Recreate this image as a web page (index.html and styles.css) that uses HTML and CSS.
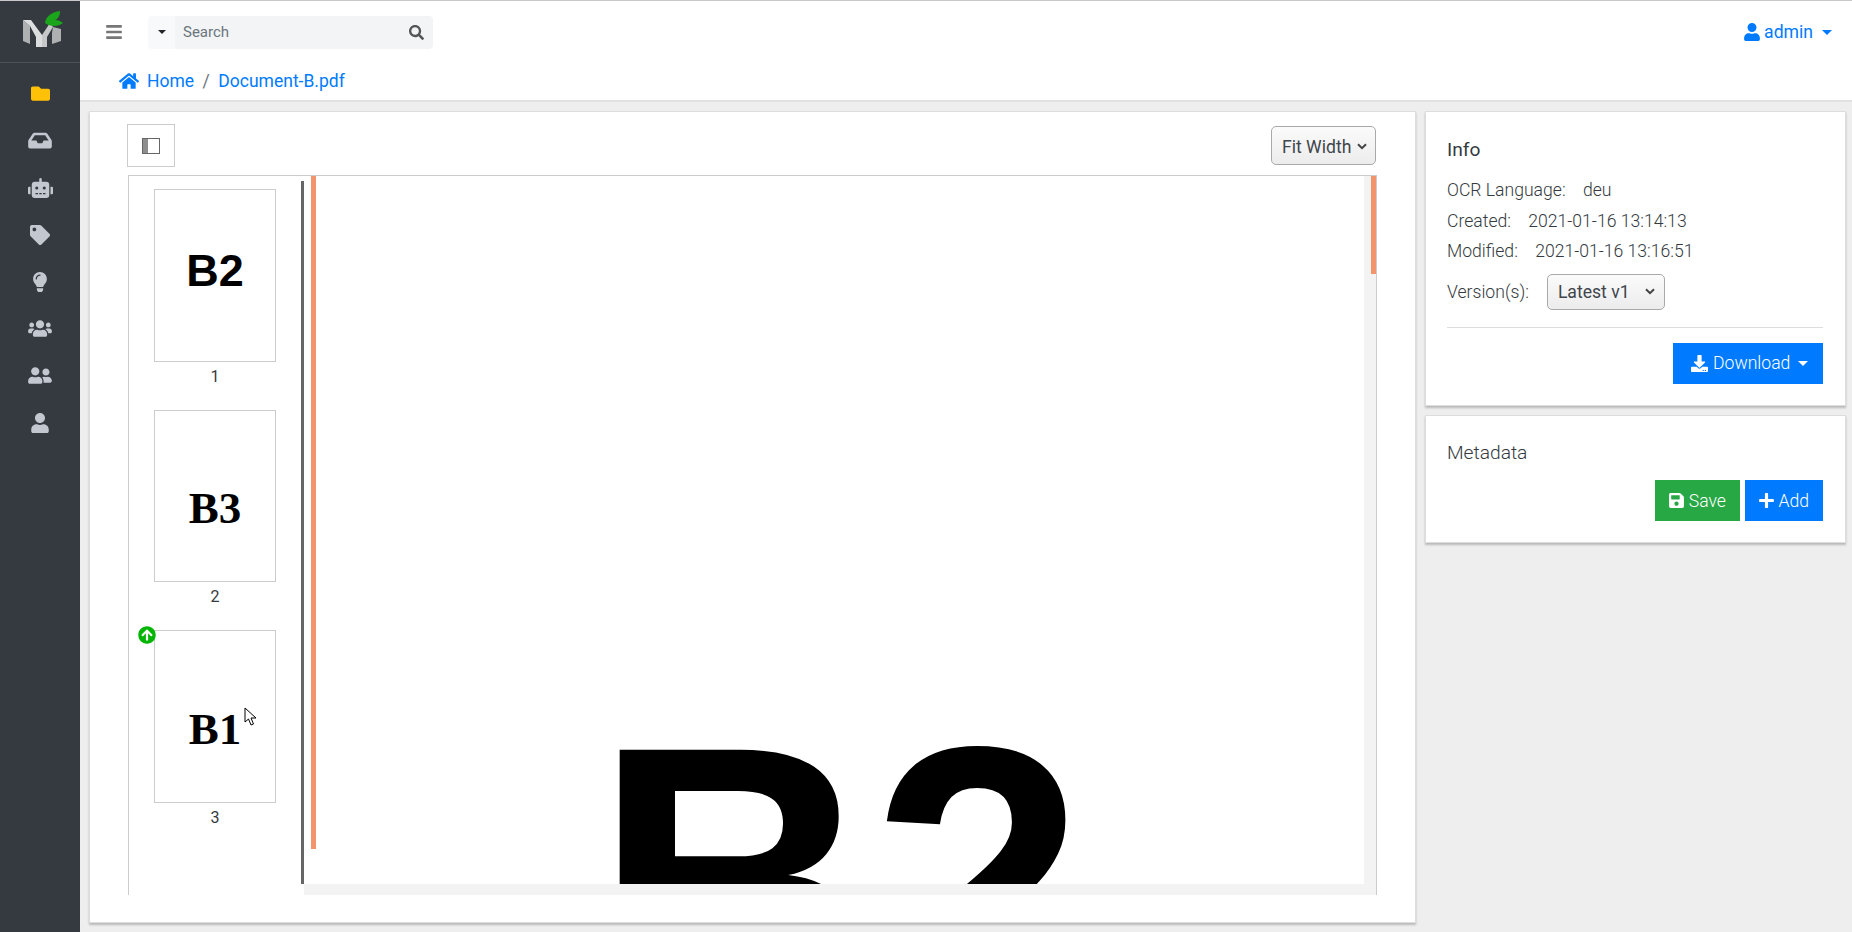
FILE: index.html
```html
<!DOCTYPE html>
<html lang="en">
<head>
  <meta charset="UTF-8">
  <meta name="viewport" content="width=device-width, initial-scale=1.0">
  <title>Document-B.pdf</title>
  <link rel="stylesheet" href="styles.css">
</head>
<body>
  <div class="app">
    <aside class="sidebar">
      <div class="logo">
        <svg width="50" height="46" viewBox="0 0 50 46">
          <path fill="#aeb0b2" d="M7 14 L14 20 L14 38 L7 35 Z"/>
          <path fill="#dcddde" d="M7 14 L15 14 L26 29 L26 41 L20 41 L20 31 L14 20 Z"/>
          <path fill="#c6c7c9" d="M26 29 L34 17 L37 21 L31 31 L31 41 L26 41 Z"/>
          <path fill="#aeb0b2" d="M37 21 L45 23 L45 35 L36 38 L36 27 Z"/>
          <path fill="#1aa51a" d="M29 17 C30 10 36 6 44 5 C44 10 42 13 39 14 C42 14 45 15 47 17 C42 21 34 21 29 17 Z"/>
        </svg>
      </div>
      <nav class="side-nav">
        <a class="side-item side-item-active"><svg width="21" height="19" viewBox="0 0 512 512"><path fill="currentColor" d="M464 128H272l-64-64H48C21.49 64 0 85.49 0 112v288c0 26.51 21.49 48 48 48h416c26.51 0 48-21.49 48-48V176c0-26.51-21.49-48-48-48z"/></svg></a>
        <a class="side-item"><svg width="24" height="21" viewBox="0 0 576 512"><path fill="currentColor" d="M567.938 243.908L462.25 85.374A48.003 48.003 0 0 0 422.311 64H153.689a48 48 0 0 0-39.938 21.374L8.062 243.908A47.994 47.994 0 0 0 0 270.533V400c0 26.51 21.49 48 48 48h480c26.51 0 48-21.49 48-48V270.533a47.994 47.994 0 0 0-8.062-26.625zM162.252 128h251.497l85.333 128H376l-32 64H232l-32-64H76.918l85.334-128z"/></svg></a>
        <a class="side-item"><svg width="25" height="20" viewBox="0 0 640 512"><path fill="currentColor" d="M32,224H64V416H32A31.96166,31.96166,0,0,1,0,384V256A31.96166,31.96166,0,0,1,32,224Zm512-48V448a64.06328,64.06328,0,0,1-64,64H160a64.06328,64.06328,0,0,1-64-64V176a79.974,79.974,0,0,1,80-80H288V32a32,32,0,0,1,64,0V96H464A79.974,79.974,0,0,1,544,176ZM264,256a40,40,0,1,0-40,40A39.997,39.997,0,0,0,264,256Zm-8,128H192v32h64Zm96,0H288v32h64ZM456,256a40,40,0,1,0-40,40A39.997,39.997,0,0,0,456,256Zm-8,128H384v32h64ZM640,256V384a31.96166,31.96166,0,0,1-32,32H576V224h32A31.96166,31.96166,0,0,1,640,256Z"/></svg></a>
        <a class="side-item"><svg width="20" height="20" viewBox="0 0 512 512"><path fill="currentColor" d="M0 252.118V48C0 21.49 21.49 0 48 0h204.118a48 48 0 0 1 33.941 14.059l211.882 211.882c18.745 18.745 18.745 49.137 0 67.882L293.823 497.941c-18.745 18.745-49.137 18.745-67.882 0L14.059 286.059A48 48 0 0 1 0 252.118zM112 64c-26.51 0-48 21.49-48 48s21.49 48 48 48 48-21.49 48-48-21.49-48-48-48z"/></svg></a>
        <a class="side-item"><svg width="14" height="20" viewBox="0 0 352 512"><path fill="currentColor" d="M96.06 454.35c.01 6.29 1.87 12.45 5.36 17.69l17.09 25.69a31.99 31.99 0 0 0 26.64 14.28h61.71a31.99 31.99 0 0 0 26.64-14.28l17.09-25.69a31.989 31.989 0 0 0 5.36-17.69l.04-38.35H96.01l.05 38.35zM0 176c0 44.37 16.45 84.85 43.56 115.78 16.52 18.85 42.36 58.23 52.21 91.45.04.26.07.52.11.78h160.24c.04-.26.07-.51.11-.78 9.85-33.22 35.69-72.6 52.21-91.45C335.55 260.85 352 220.37 352 176 352 78.61 272.91-.3 175.45 0 73.44.31 0 82.97 0 176zm176-80c-44.11 0-80 35.89-80 80 0 8.84-7.16 16-16 16s-16-7.16-16-16c0-61.76 50.24-112 112-112 8.84 0 16 7.16 16 16s-7.16 16-16 16z"/></svg></a>
        <a class="side-item"><svg width="24" height="19" viewBox="0 0 640 512"><path fill="currentColor" d="M96 224c35.3 0 64-28.7 64-64s-28.7-64-64-64-64 28.7-64 64 28.7 64 64 64zm448 0c35.3 0 64-28.7 64-64s-28.7-64-64-64-64 28.7-64 64 28.7 64 64 64zm32 32h-64c-17.6 0-33.5 7.1-45.1 18.6 40.3 22.1 68.9 62 75.1 109.4h66c17.7 0 32-14.3 32-32v-32c0-35.3-28.7-64-64-64zm-256 0c61.9 0 112-50.1 112-112S381.9 32 320 32 208 82.1 208 144s50.1 112 112 112zm76.8 32h-8.3c-20.8 10-43.9 16-68.5 16s-47.6-6-68.5-16h-8.3C179.6 288 128 339.6 128 403.2V432c0 26.5 21.5 48 48 48h288c26.5 0 48-21.5 48-48v-28.8c0-63.6-51.6-115.2-115.2-115.2zm-223.7-13.4C161.5 263.1 145.6 256 128 256H64c-35.3 0-64 28.7-64 64v32c0 17.7 14.3 32 32 32h65.9c6.3-47.4 34.9-87.3 75.2-109.4z"/></svg></a>
        <a class="side-item"><svg width="24" height="19" viewBox="0 0 640 512"><path fill="currentColor" d="M192 256c61.9 0 112-50.1 112-112S253.9 32 192 32 80 82.1 80 144s50.1 112 112 112zm76.8 32h-8.3c-20.8 10-43.9 16-68.5 16s-47.6-6-68.5-16h-8.3C51.6 288 0 339.6 0 403.2V432c0 26.5 21.5 48 48 48h288c26.5 0 48-21.5 48-48v-28.8c0-63.6-51.6-115.2-115.2-115.2zM480 256c53 0 96-43 96-96s-43-96-96-96-96 43-96 96 43 96 96 96zm48 32h-3.8c-13.9 4.8-28.6 8-44.2 8s-30.3-3.2-44.2-8H432c-20.4 0-39.2 5.9-55.7 15.4 24.4 26.3 39.7 61.2 39.7 99.8v38.4c0 2.2-.5 4.3-.6 6.4H592c26.5 0 48-21.5 48-48 0-61.9-50.1-112-112-112z"/></svg></a>
        <a class="side-item"><svg width="18" height="20" viewBox="0 0 448 512"><path fill="currentColor" d="M224 256c70.7 0 128-57.3 128-128S294.7 0 224 0 96 57.3 96 128s57.3 128 128 128zm89.6 32h-16.7c-22.2 10.2-46.9 16-72.9 16s-50.6-5.8-72.9-16h-16.7C60.2 288 0 348.2 0 422.4V464c0 26.5 21.5 48 48 48h352c26.5 0 48-21.5 48-48v-41.6c0-74.2-60.2-134.4-134.4-134.4z"/></svg></a>
      </nav>
    </aside>

    <div class="main">
      <header class="topbar">
        <div class="topbar-row">
          <button class="menu-btn">
            <svg width="16" height="18" viewBox="0 0 448 512"><path fill="currentColor" d="M16 132h416c8.837 0 16-7.163 16-16V76c0-8.837-7.163-16-16-16H16C7.163 60 0 67.163 0 76v40c0 8.837 7.163 16 16 16zm0 160h416c8.837 0 16-7.163 16-16v-40c0-8.837-7.163-16-16-16H16c-8.837 0-16 7.163-16 16v40c0 8.837 7.163 16 16 16zm0 160h416c8.837 0 16-7.163 16-16v-40c0-8.837-7.163-16-16-16H16c-8.837 0-16 7.163-16 16v40c0 8.837 7.163 16 16 16z"/></svg>
          </button>
          <div class="search">
            <span class="search-type"><i class="caret caret-dark"></i></span>
            <span class="search-field">
              <span class="search-text">Search</span>
              <svg width="15" height="15" viewBox="0 0 512 512"><path fill="currentColor" d="M505 442.7L405.3 343c-4.5-4.5-10.6-7-17-7H372c27.6-35.3 44-79.7 44-128C416 93.1 322.9 0 208 0S0 93.1 0 208s93.1 208 208 208c48.3 0 92.7-16.4 128-44v16.3c0 6.4 2.5 12.5 7 17l99.7 99.7c9.4 9.4 24.6 9.4 33.9 0l28.3-28.3c9.4-9.4 9.4-24.6.1-34zM208 336c-70.7 0-128-57.2-128-128 0-70.7 57.2-128 128-128 70.7 0 128 57.2 128 128 0 70.7-57.2 128-128 128z"/></svg>
            </span>
          </div>
          <a class="user-menu">
            <svg width="16" height="18" viewBox="0 0 448 512"><path fill="currentColor" d="M224 256c70.7 0 128-57.3 128-128S294.7 0 224 0 96 57.3 96 128s57.3 128 128 128zm89.6 32h-16.7c-22.2 10.2-46.9 16-72.9 16s-50.6-5.8-72.9-16h-16.7C60.2 288 0 348.2 0 422.4V464c0 26.5 21.5 48 48 48h352c26.5 0 48-21.5 48-48v-41.6c0-74.2-60.2-134.4-134.4-134.4z"/></svg>
            admin
            <i class="caret"></i>
          </a>
        </div>
        <div class="breadcrumb">
          <svg width="20" height="18" viewBox="0 0 576 512"><path fill="currentColor" d="M280.37 148.26L96 300.11V464a16 16 0 0 0 16 16l112.06-.29a16 16 0 0 0 15.92-16V368a16 16 0 0 1 16-16h64a16 16 0 0 1 16 16v95.64a16 16 0 0 0 16 16.05L464 480a16 16 0 0 0 16-16V300L295.67 148.26a12.19 12.19 0 0 0-15.3 0zM571.6 251.47L488 182.56V44.05a12 12 0 0 0-12-12h-56a12 12 0 0 0-12 12v72.61L318.47 43a48 48 0 0 0-61 0L4.34 251.47a12 12 0 0 0-1.6 16.9l25.5 31A12 12 0 0 0 45.15 301l235.22-193.74a12.19 12.19 0 0 1 15.3 0L530.9 301a12 12 0 0 0 16.9-1.6l25.5-31a12 12 0 0 0-1.7-16.93z"/></svg>
          <a>Home</a>
          <span class="crumb-sep">/</span>
          <a>Document-B.pdf</a>
        </div>
      </header>

      <div class="content">
        <section class="card viewer-card">
          <div class="viewer-tools">
            <button class="toggle-btn">
              <svg width="18" height="16" viewBox="0 0 18 16"><rect x="0.5" y="0.5" width="17" height="15" fill="#fff" stroke="#666"/><rect x="1" y="1" width="5" height="14" fill="#8e8e8e"/></svg>
            </button>
            <button class="select-btn">Fit Width <svg class="chevron" width="10" height="7" viewBox="0 0 10 7"><path d="M1 1.2 L5 5.2 L9 1.2" fill="none" stroke="#444" stroke-width="2"/></svg></button>
          </div>

          <div class="viewer">
            <div class="thumbs">
              <div class="thumb-item">
                <div class="thumb thumb-sans">B2</div>
                <div class="thumb-label">1</div>
              </div>
              <div class="thumb-item">
                <div class="thumb thumb-serif">B3</div>
                <div class="thumb-label">2</div>
              </div>
              <div class="thumb-item">
                <div class="thumb thumb-serif">
                  B1
                  <span class="ocr-badge">
                    <svg width="18" height="18" viewBox="0 0 512 512"><path fill="#02b502" d="M8 256C8 119 119 8 256 8s248 111 248 248-111 248-248 248S8 393 8 256zm143.6 28.9l72.4-75.5V392c0 13.3 10.7 24 24 24h16c13.3 0 24-10.7 24-24V209.4l72.4 75.5c9.3 9.7 24.8 9.9 34.3.4l10.9-11c9.4-9.4 9.4-24.6 0-33.9L273 107.7c-9.4-9.4-24.6-9.4-33.9 0L106.3 240.4c-9.4 9.4-9.4 24.6 0 33.9l10.9 11c9.6 9.5 25.1 9.3 34.4-.4z"/></svg>
                  </span>
                  <svg class="cursor" width="13" height="20" viewBox="0 0 13 20"><path d="M1 1 L1 15 L4.5 12 L7 18 L9.5 17 L7 11 L12 11 Z" fill="#fff" stroke="#000" stroke-width="1"/></svg>
                </div>
                <div class="thumb-label">3</div>
              </div>
            </div>
            <div class="divider"></div>
            <div class="doc">
              <div class="doc-row">
                <div class="doc-page">
                  <div class="doc-thumb-bar"></div>
                  <div class="doc-text">B2</div>
                </div>
                <div class="v-track"><div class="v-thumb"></div></div>
              </div>
              <div class="h-track"></div>
            </div>
          </div>
        </section>

        <div class="side-panels">
          <section class="card info-card">
            <h5 class="info-title">Info</h5>
            <div class="info-line">OCR Language: <span class="info-value">deu</span></div>
            <div class="info-line">Created: <span class="info-value">2021-01-16 13:14:13</span></div>
            <div class="info-line">Modified: <span class="info-value">2021-01-16 13:16:51</span></div>
            <div class="version-line">
              <span>Version(s):</span>
              <button class="select-btn version-select">Latest v1 <svg class="chevron" width="10" height="7" viewBox="0 0 10 7"><path d="M1 1.2 L5 5.2 L9 1.2" fill="none" stroke="#444" stroke-width="2"/></svg></button>
            </div>
            <hr class="info-rule">
            <div class="actions">
              <button class="btn btn-blue btn-download">
                <svg width="17" height="17" viewBox="0 0 512 512"><path fill="currentColor" d="M216 0h80c13.3 0 24 10.7 24 24v168h87.7c17.8 0 26.7 21.5 14.1 34.1L269.7 378.3c-7.5 7.5-19.8 7.5-27.3 0L90.1 226.1c-12.6-12.6-3.7-34.1 14.1-34.1H192V24c0-13.3 10.7-24 24-24zm296 376v112c0 13.3-10.7 24-24 24H24c-13.3 0-24-10.7-24-24V376c0-13.3 10.7-24 24-24h146.7l49 49c20.1 20.1 52.5 20.1 72.6 0l49-49H488c13.3 0 24 10.7 24 24zm-124 88c0-11-9-20-20-20s-20 9-20 20 9 20 20 20 20-9 20-20zm64 0c0-11-9-20-20-20s-20 9-20 20 9 20 20 20 20-9 20-20z"/></svg>
                Download
                <i class="caret caret-white"></i>
              </button>
            </div>
          </section>

          <section class="card meta-card">
            <div class="meta-title">Metadata</div>
            <div class="actions meta-actions">
              <button class="btn btn-green">
                <svg width="15" height="17" viewBox="0 0 448 512"><path fill="currentColor" d="M433.941 129.941l-83.882-83.882A48 48 0 0 0 316.118 32H48C21.49 32 0 53.49 0 80v352c0 26.51 21.49 48 48 48h352c26.51 0 48-21.49 48-48V163.882a48 48 0 0 0-14.059-33.941zM224 416c-35.346 0-64-28.654-64-64 0-35.346 28.654-64 64-64s64 28.654 64 64c0 35.346-28.654 64-64 64zm96-304.52V212c0 6.627-5.373 12-12 12H76c-6.627 0-12-5.373-12-12V108c0-6.627 5.373-12 12-12h228.52c3.183 0 6.235 1.264 8.485 3.515l3.48 3.48A11.996 11.996 0 0 1 320 111.48z"/></svg>
                Save
              </button>
              <button class="btn btn-blue">
                <svg width="15" height="17" viewBox="0 0 448 512"><path fill="currentColor" d="M416 208H272V64c0-17.67-14.33-32-32-32h-32c-17.67 0-32 14.33-32 32v144H32c-17.67 0-32 14.33-32 32v32c0 17.67 14.33 32 32 32h144v144c0 17.67 14.33 32 32 32h32c17.67 0 32-14.33 32-32V304h144c17.67 0 32-14.33 32-32v-32c0-17.67-14.33-32-32-32z"/></svg>
                Add
              </button>
            </div>
          </section>
        </div>
      </div>
    </div>
  </div>
</body>
</html>
```

FILE: styles.css
```css
*{
  box-sizing: border-box;
}
body{
  margin: 0;
  height: 932px;
  overflow: hidden;
  border-top: 1px solid #c8c8c8;
  font-family: Roboto, "Liberation Sans", sans-serif;
  font-size: 17.6px;
  color: #343a40;
  background: #eee;
}
a{
  color: #007bff;
}
button{
  font-family: inherit;
}
svg{
  display: block;
}
.app{
  display: flex;
  height: 931px;
}

/* sidebar */
.sidebar{
  width: 80px;
  flex: none;
  background: #343a40;
}
.logo{
  height: 62px;
  padding: 5px 0 0 16px;
  border-bottom: 1px solid #4b545c;
}
.side-nav{
  display: flex;
  flex-direction: column;
  padding-top: 7px;
}
.side-item{
  height: 47px;
  display: flex;
  align-items: center;
  justify-content: center;
  color: #c2c7d0;
}
.side-item-active{
  color: #ffc107;
}

/* top bar */
.main{
  flex: 1;
  min-width: 0;
  display: flex;
  flex-direction: column;
}
.topbar{
  height: 101px;
  background: #fff;
  border-bottom: 2px solid #e2e2e2;
}
.topbar-row{
  display: flex;
  align-items: center;
  height: 62px;
  padding: 0 20px 0 26px;
}
.menu-btn{
  padding: 0;
  border: 0;
  background: none;
  color: #777;
  margin-right: 26px;
}
.search{
  display: flex;
  width: 285px;
  height: 33px;
  border-radius: 4px;
  overflow: hidden;
}
.search-type{
  width: 27px;
  display: flex;
  align-items: center;
  justify-content: center;
  background: #f8f9fa;
}
.search-field{
  flex: 1;
  display: flex;
  align-items: center;
  justify-content: space-between;
  padding: 0 9px 0 8px;
  background: #f2f4f6;
  color: #555;
}
.search-text{
  font-size: 15px;
  color: #6c757d;
}
.caret{
  display: inline-block;
  width: 0;
  height: 0;
  border-top: 5px solid currentColor;
  border-left: 5px solid transparent;
  border-right: 5px solid transparent;
}
.caret-dark{
  color: #212529;
  border-width: 4px 4px 0;
}
.caret-white{
  color: #fff;
  margin-left: 3px;
}
.user-menu{
  margin-left: auto;
  display: flex;
  align-items: center;
  gap: 4px;
}
.user-menu .caret{
  margin-left: 5px;
}
.breadcrumb{
  display: flex;
  align-items: center;
  height: 36px;
  padding-left: 39px;
  font-size: 17.5px;
  color: #007bff;
}
.breadcrumb svg{
  margin-right: 8px;
}
.crumb-sep{
  margin: 0 8.5px;
  color: #6c757d;
}

/* cards */
.content{
  flex: 1;
  display: flex;
  gap: 9px;
  padding: 9px 6px 9px 9px;
  min-height: 0;
}
.card{
  background: #fff;
  border: 1px solid #ddd;
  box-shadow: 0 2px 2px rgba(0, 0, 0, .22);
}
.viewer-card{
  width: 1327px;
  flex: none;
  padding: 12px 38px 0;
}
.viewer-tools{
  display: flex;
  align-items: center;
  justify-content: space-between;
  height: 43px;
  margin-bottom: 8px;
}
.toggle-btn{
  width: 48px;
  height: 43px;
  margin-left: -1px;
  padding: 0;
  display: flex;
  align-items: center;
  justify-content: center;
  background: #fff;
  border: 1px solid #ccc;
}
.select-btn{
  display: flex;
  align-items: center;
  justify-content: space-between;
  width: 105px;
  height: 39px;
  margin-right: 1px;
  padding: 2px 8px 0 10px;
  font-size: 17.6px;
  color: #3f454b;
  border: 1px solid #a9a9a9;
  border-radius: 5px;
  background: linear-gradient(#fbfbfb, #ececec);
}
.viewer{
  display: flex;
  height: 720px;
  border: 1px solid #ccc;
  border-bottom: 0;
}

/* page thumbnails */
.thumbs{
  width: 172px;
  flex: none;
  padding-top: 13px;
}
.thumb-item{
  margin-bottom: 21px;
}
.thumb{
  position: relative;
  width: 122px;
  height: 172.5px;
  margin: 0 auto;
  border: 1px solid #ccc;
  display: flex;
  align-items: center;
  justify-content: center;
  font-size: 45px;
  font-weight: bold;
  color: #000;
}
.thumb-sans{
  font-family: "Liberation Sans", sans-serif;
  padding-bottom: 8px;
}
.thumb-serif{
  font-family: "Liberation Serif", serif;
  padding-top: 25px;
}
.thumb-label{
  margin-top: 3.2px;
  line-height: 24px;
  font-size: 16px;
  text-align: center;
}
.ocr-badge{
  position: absolute;
  left: -17px;
  top: -5px;
}
.cursor{
  position: absolute;
  left: 89px;
  top: 76px;
}
.divider{
  width: 3px;
  flex: none;
  margin: 5px 0 11px;
  background: #666;
}

/* document pane */
.doc{
  flex: 1;
  min-width: 0;
  display: flex;
  flex-direction: column;
}
.doc-row{
  flex: 1;
  min-height: 0;
  display: flex;
}
.doc-page{
  position: relative;
  flex: 1;
  overflow: hidden;
}
.doc-thumb-bar{
  position: absolute;
  left: 7px;
  top: 0;
  width: 5px;
  height: 673px;
  background: #f2946c;
}
.doc-text{
  padding: 513px 0 0 290px;
  font-family: "Liberation Sans", sans-serif;
  font-size: 384px;
  font-weight: bold;
  line-height: 1;
  color: #000;
}
.v-track{
  width: 12px;
  flex: none;
  display: flex;
  justify-content: flex-end;
  background: #f3f3f3;
}
.v-thumb{
  width: 5px;
  height: 98px;
  background: #f2946c;
}
.h-track{
  height: 11px;
  flex: none;
  background: #f3f3f3;
}

/* right column */
.side-panels{
  flex: 1;
  display: flex;
  flex-direction: column;
  gap: 9px;
  align-items: stretch;
}
.info-card{
  height: 295px;
  padding: 0 22px 0 21px;
}
.info-title{
  margin: 26px 0 13px;
  font-size: 19.2px;
  font-weight: 400;
  line-height: 24px;
}
.info-line{
  height: 30.5px;
  line-height: 30px;
  font-weight: 300;
  white-space: pre-wrap;
}
.info-value{
  margin-left: 13px;
}
.version-line{
  display: flex;
  align-items: center;
  gap: 18px;
  margin-top: 7px;
  font-weight: 300;
}
.version-select{
  width: 118px;
  height: 36px;
  margin: 0;
  padding: 0 9px 0 10px;
  font-weight: 400;
}
.info-rule{
  margin: 17px 0 15px;
  border: 0;
  border-top: 1px solid #ddd;
}
.actions{
  display: flex;
  justify-content: flex-end;
  gap: 5px;
}
.btn{
  display: flex;
  align-items: center;
  justify-content: center;
  gap: 4.5px;
  height: 41px;
  padding: 0 14px;
  border: 0;
  font-size: 17.6px;
  font-weight: 300;
  color: #fff;
}
.btn-blue{
  background: #007bff;
}
.btn-green{
  background: #28a745;
}
.btn-download{
  width: 150px;
  justify-content: flex-start;
  gap: 5px;
  padding: 0 0 0 18px;
}
.meta-card{
  height: 128px;
  padding: 0 22px 0 21px;
}
.meta-title{
  margin-top: 25px;
  line-height: 24px;
  font-size: 19.2px;
  font-weight: 300;
}
.meta-actions{
  margin-top: 15px;
}
```
